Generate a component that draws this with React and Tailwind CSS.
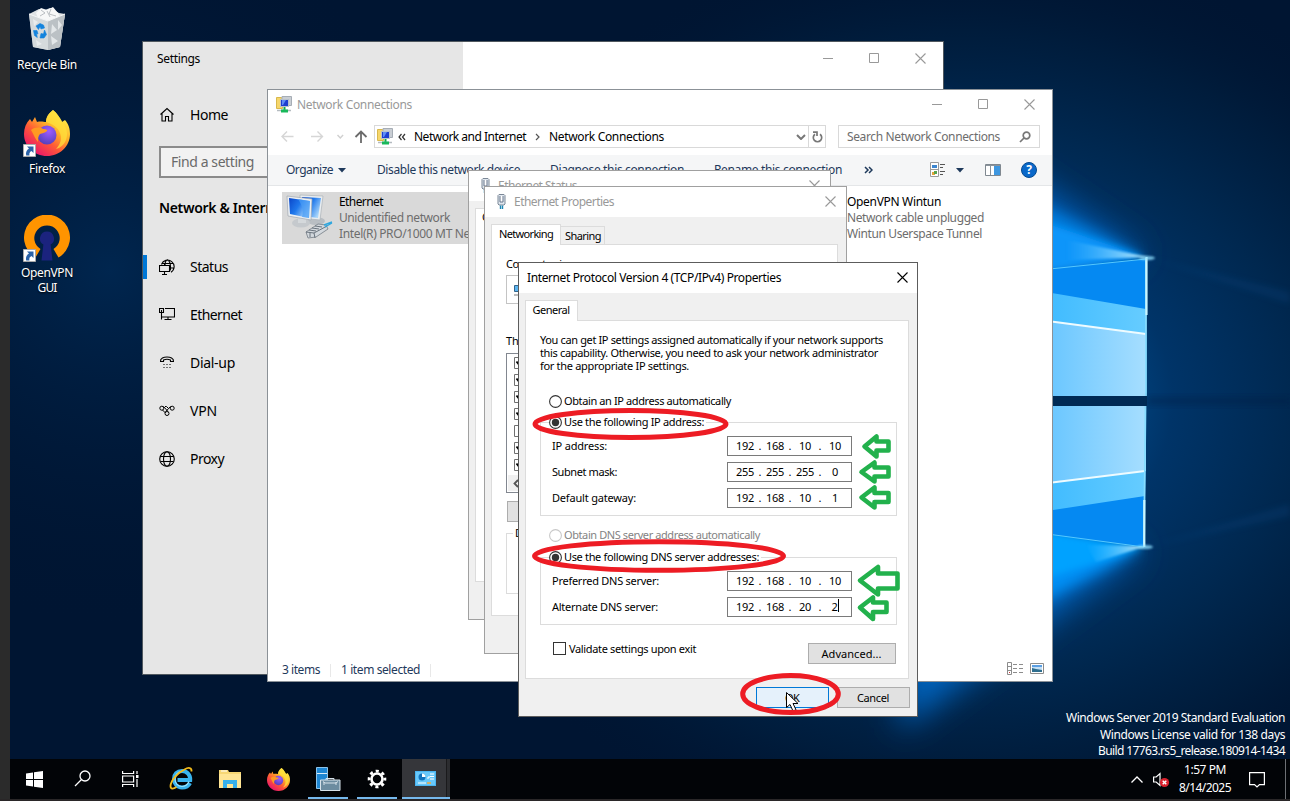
import React, { useLayoutEffect, useRef, useState } from "react";

/* Single line of text whose tracking is adjusted so that it fills `w` pixels. */
function T({ w, className = "", children }) {
  const ref = useRef(null);
  const [ls, setLs] = useState(0);
  useLayoutEffect(() => {
    const n = String(children).length;
    if (w && ref.current) setLs((w - ref.current.getBoundingClientRect().width) / n);
  }, []);
  return (
    <span
      ref={ref}
      className={"inline-block shrink-0 whitespace-pre " + className}
      style={{ letterSpacing: ls + "px" }}
    >
      {children}
    </span>
  );
}

function Close({ className = "text-[#999]" }) {
  return (
    <svg className={"h-[11px] w-[11px] shrink-0 " + className} viewBox="0 0 11 11" fill="none" stroke="currentColor" strokeWidth="1.1">
      <path d="M.5.5l10 10M10.5.5l-10 10" />
    </svg>
  );
}
function Minimise() {
  return (
    <svg className="h-[11px] w-[11px] shrink-0" viewBox="0 0 11 11" fill="none" stroke="#999">
      <path d="M0 5.5h10" />
    </svg>
  );
}
function Maximise() {
  return (
    <svg className="h-[11px] w-[11px] shrink-0" viewBox="0 0 11 11" fill="none" stroke="#999">
      <path d="M.5.5h9v9h-9z" />
    </svg>
  );
}

function Wallpaper() {
  return (
    <svg className="absolute inset-0 h-[801px] w-[1290px]" viewBox="0 0 1290 801">
      <defs>
        <radialGradient id="glow" gradientUnits="userSpaceOnUse" cx="960" cy="400" r="400" gradientTransform="translate(960 400) scale(1.4 1.15) translate(-960 -400)">
          <stop offset="0" stopColor="#0068c0" />
          <stop offset=".2" stopColor="#005093" />
          <stop offset=".38" stopColor="#003468" />
          <stop offset=".6" stopColor="#002850" />
          <stop offset=".8" stopColor="#001d3d" stopOpacity=".9" />
          <stop offset="1" stopColor="#001532" stopOpacity="0" />
        </radialGradient>
        <radialGradient id="leftGlow" gradientUnits="userSpaceOnUse" cx="110" cy="270" r="360">
          <stop offset="0" stopColor="#00264f" />
          <stop offset="1" stopColor="#001532" stopOpacity="0" />
        </radialGradient>
        <linearGradient id="pane" x1="0" x2="1">
          <stop offset="0" stopColor="#64c4ff" />
          <stop offset="1" stopColor="#a6deff" />
        </linearGradient>
        <linearGradient id="band" x1="0" x2="1">
          <stop offset="0" stopColor="#3dbaff" />
          <stop offset="1" stopColor="#66ccff" />
        </linearGradient>
        <linearGradient id="flare" x1="0" x2="1">
          <stop offset="0" stopColor="#5cc6ff" stopOpacity="0" />
          <stop offset="1" stopColor="#c4f0ff" />
        </linearGradient>
        <filter id="b12" x="-50%" y="-50%" width="200%" height="200%"><feGaussianBlur stdDeviation="16" /></filter>
        <filter id="b5" x="-50%" y="-50%" width="200%" height="200%"><feGaussianBlur stdDeviation="7" /></filter>
        <filter id="b3" x="-50%" y="-50%" width="200%" height="200%"><feGaussianBlur stdDeviation="3" /></filter>
        <filter id="b2" x="-50%" y="-50%" width="200%" height="200%"><feGaussianBlur stdDeviation="1.3" /></filter>
      </defs>
      <rect width="1290" height="801" fill="#001532" />
      <rect width="1290" height="801" fill="url(#leftGlow)" />
      <rect width="1290" height="801" fill="url(#glow)" />
      <path d="M900 90L1145 256 900 300z" fill="#005cb2" filter="url(#b12)" />
      <path d="M900 730L1142 550 900 500z" fill="#0064be" filter="url(#b12)" />
      <path d="M960 165L1144 257 960 290z" fill="#007fe0" filter="url(#b5)" />
      <path d="M960 645L1142 549 960 520z" fill="#0090f5" filter="url(#b5)" />
      <path d="M980 200L1146 257 980 280z" fill="#0795fa" filter="url(#b3)" />
      <path d="M980 598L1144 548 980 520z" fill="#00a2ff" filter="url(#b3)" />
      <path d="M1066 240L1148 257 1066 260z" fill="url(#flare)" filter="url(#b2)" />
      <path d="M1096 562L1146 546 1086 545z" fill="url(#flare)" filter="url(#b2)" />
      <path d="M1040 270L1146 259V396H1040z" fill="#0589f2" />
      <path d="M1040 291L1146 309V396H1040z" fill="url(#band)" />
      <path d="M1040 320L1146 334V396H1040z" fill="url(#pane)" />
      <path d="M1040 320L1146 334" stroke="#eefbff" strokeWidth="2.2" />
      <path d="M1040 270L1146 259" stroke="#55c8ff" />
      <path d="M1040 406H1146L1144.500 547L1040 533z" fill="#0589f2" />
      <path d="M1040 406H1146L1145 496L1040 512z" fill="url(#band)" />
      <path d="M1040 406H1146V471L1040 484z" fill="url(#pane)" />
      <path d="M1040 484L1145 471" stroke="#eefbff" strokeWidth="2.2" />
      <path d="M1040 533L1144 547" stroke="#55c8ff" />
      <path d="M1146 258V396M1145.500 406L1144 547" stroke="#86dcff" strokeWidth="1.800" />
      <path d="M1146.500 257V315M1144.300 500V547" stroke="#c9f6ff" strokeWidth="2.200" />
      <path d="M1040 396H1147V406H1040z" fill="#002a55" />
      <path d="M1147 397H1290V405H1147z" fill="#001f42" opacity=".35" filter="url(#b3)" />
      <path d="M1148 258L1290 292V304z M1146 547L1290 504V516z" fill="#0a4a86" opacity=".25" filter="url(#b3)" />
      <ellipse cx="1147" cy="258" rx="8" ry="2" fill="#8fe0ff" opacity=".8" filter="url(#b2)" />
      <ellipse cx="1145" cy="547" rx="8" ry="2" fill="#8fe0ff" opacity=".8" filter="url(#b2)" />
    </svg>
  );
}

function FirefoxLogo({ className }) {
  return (
    <svg className={className} viewBox="0 0 46 46">
      <defs>
        <linearGradient id="fxBody" x1=".85" y1=".1" x2=".2" y2=".95">
          <stop offset="0" stopColor="#fff24a" />
          <stop offset=".35" stopColor="#ffb028" />
          <stop offset=".62" stopColor="#ff5a36" />
          <stop offset="1" stopColor="#e8116e" />
        </linearGradient>
        <radialGradient id="fxGlobe" cx=".6" cy=".3" r=".8">
          <stop offset="0" stopColor="#a05bff" />
          <stop offset="1" stopColor="#4a3db5" />
        </radialGradient>
      </defs>
      <path d="M29 0C33 3 36 8 38 12l3-2c4 5 5 9 5 14 0 12-10 22-23 22S0 36 0 24c0-6 2-11 6-15l2 3 3-5 2 5c4-1 7 0 9 0 0-5 3-9 7-12z" fill="url(#fxBody)" />
      <path d="M29 0C33 3 36 8 39 13c4 5 5 11 3 17-2 5-6 8-10 9 5-5 6-11 4-16-2-6-8-9-14-11 0-5 3-9 7-12z" fill="#ffe03c" opacity=".75" />
      <circle cx="23" cy="25" r="9.500" fill="url(#fxGlobe)" />
      <path d="M7 20c4-3 9-3 12-1 3 0 5 1 4 2-2 2-5 2-7 3-2 2-2 5-2 8-3-3-4-7-7-12z" fill="#ff9a22" />
    </svg>
  );
}

function Shortcut() {
  return (
    <svg className="absolute bottom-[-1px] left-[-1px] h-[13px] w-[13px]" viewBox="0 0 13 13">
      <path d="M.5.5h12v12H.5z" fill="#fff" stroke="#aaa" />
      <path d="M4 2.500h6.500V9L8.500 7C6.500 8 6 9.500 6.500 11.500H3.200C2.500 8.500 3.500 6 6 4.500z" fill="#2a62a8" />
    </svg>
  );
}

function RecycleIcon() {
  return (
    <svg className="h-[44px] w-[40px]" viewBox="0 0 40 44">
      <path d="M2 7L12 2l6 1 5-2 9 5 6 1-5 33-12 3-15-3z" fill="#dfe3e5" />
      <path d="M9 6l5-5 6 2 6-3 5 6 2 4-10 4-12-3z" fill="#f7f8f8" />
      <path d="M14 3l4 3-5 3M24 2l-2 5 7 2M20 4l3 6" stroke="#a9afb4" fill="none" strokeWidth=".8" />
      <path d="M2 7l19 7 17-7-5 33-12 3-15-3z" fill="#d3d8db" opacity=".85" />
      <path d="M21 14l17-7-5 33-12 3z" fill="#bbc1c5" />
      <path d="M25 17l5 6-6 4zM31 13l4 5-4 5zM24 29l7 5-6 4zM6 12l5 3-4 4zM9 33l6 4-5 2z" fill="#edf0f1" opacity=".8" />
      <path d="M2 7l19 7 17-7" stroke="#f4f6f7" fill="none" />
      <path d="M9 19l4-2.500 3.500 1.500 1 3-3.500 1-1-2.500-1.500 3zM6.500 23.500l3.500 0 1 3.500-1.500-.5.800 4-2.800-2zM17.500 23l2 4.500-2.500 3.500h-4l1-4.500 2.500.500z" fill="#1383dd" stroke="#1383dd" strokeWidth=".6" />
    </svg>
  );
}

function OpenVpnIcon() {
  return (
    <svg className="h-[46px] w-[46px]" viewBox="0 0 46 46">
      <path d="M11.500 42.500A23 23 0 1 1 34.500 42.500L29.500 34A12.700 12.700 0 1 0 16.500 34z" fill="#ff9400" />
      <path d="M23 16.500a7 7 0 0 1 3.600 13L28.500 45.500h-11l1.900-16A7 7 0 0 1 23 16.500z" fill="#1b237e" />
    </svg>
  );
}

function DesktopIcons() {
  return (
    <div className="absolute left-[10px] top-[7px] flex w-[74px] flex-col items-center text-[12px] leading-[15px] text-white [text-shadow:0_1px_2px_#000]">
      <RecycleIcon />
      <T w={60} className="mt-[6px]">Recycle Bin</T>
      <div className="relative mt-[38px] h-[46px] w-[46px]">
        <FirefoxLogo className="h-[46px] w-[46px]" />
        <Shortcut />
      </div>
      <T w={36} className="mt-[5px]">Firefox</T>
      <div className="relative mt-[39px] h-[46px] w-[46px]">
        <OpenVpnIcon />
        <Shortcut />
      </div>
      <T w={52} className="mt-[4px]">OpenVPN</T>
      <T w={19}>GUI</T>
    </div>
  );
}

const navIcons = {
  Home: <path d="M1.500 7.500L8 1.500l6.500 6M3 6.500V14h3.500V9.500h3V14H13V6.500" />,
  Status: (
    <g>
      <path d="M2.500 5.500A6.500 6.500 0 1 1 12 13.200M2.500 4.500h12M6 6C6.200 3 7.500 1 8.500.8 10.500 2 12 6 11.300 11.500M11 9h4" />
      <path d="M.5 6.500h10v6H.5zM5.500 12.500v3M3 15.500h5M5.500 4.500v2" />
    </g>
  ),
  Ethernet: <path d="M.5 1.500h4v4h-4zM2.500 3v4.500M2.500 5.500v7M6 1.500h9.500v8.500H3M9 10v2.500M5.500 12.500h7" />,
  "Dial-up": (
    <g>
      <path d="M1.500 6.500C1 3 5 2 8 2s7 1 6.500 4.500h-3V5C9.500 4.200 6.500 4.200 4.500 5v1.500z" />
      <path d="M4.500 9.500h1M7.500 9.500h1M10.500 9.500h1M4.500 12.500h1M7.500 12.500h1M10.500 12.500h1" />
    </g>
  ),
  VPN: (
    <g strokeWidth="1">
      <circle cx="2.800" cy="5.200" r="2" />
      <circle cx="13.200" cy="5.200" r="2" />
      <circle cx="8" cy="10.500" r="2" />
      <path d="M4.500 3.500L9 8.500M6.500 8.800L11.500 3.500M6 3.500h1.500L9 5M3.500 7l3 3" />
    </g>
  ),
  Proxy: (
    <g>
      <circle cx="8" cy="8" r="7.300" />
      <ellipse cx="8" cy="8" rx="3.500" ry="7.300" />
      <path d="M1.500 5.500h13M1.500 10.500h13" />
    </g>
  ),
};

function NavRow({ name, w, active }) {
  return (
    <div className="flex h-[48px] items-center text-[14px]">
      <div className={"h-[24px] w-[4px] " + (active ? "bg-[#0078d7]" : "")} />
      <svg className="mb-px ml-[12px] h-[16px] w-[16px]" viewBox="0 0 16 16" fill="none" stroke="#000" strokeWidth="1.100">
        {navIcons[name]}
      </svg>
      <T w={w} className="mb-px ml-[15px]">{name}</T>
    </div>
  );
}

function SettingsWindow() {
  return (
    <div className="absolute left-[142px] top-[41px] flex h-[634px] w-[802px] border border-[#50585f] bg-white text-black">
      <div className="flex w-[320px] flex-col bg-[#e6e6e6]">
        <T w={43} className="ml-[14px] mt-[8px] self-start text-[12px] leading-[18px]">Settings</T>
        <div className="mt-[23px]"><NavRow name="Home" w={38} /></div>
        <div className="ml-[16px] mt-[7px] flex h-[32px] items-center border-2 border-[#8b8b8b] bg-[#f2f2f2] pb-[2px] pl-[10px] text-[14px] text-[#6a6a6a]">
          <T w={83}>Find a setting</T>
        </div>
        <T w={128} className="ml-[16px] mt-[20px] self-start text-[14px] font-semibold leading-[20px]">Network &amp; Internet</T>
        <div className="mt-[25px] flex flex-col">
          <NavRow name="Status" w={38} active />
          <NavRow name="Ethernet" w={52} />
          <NavRow name="Dial-up" w={45} />
          <NavRow name="VPN" w={27} />
          <NavRow name="Proxy" w={34} />
        </div>
      </div>
      <div className="flex h-[33px] flex-1 items-center justify-end gap-[35px] pr-[17px]">
        <Minimise />
        <Maximise />
        <Close />
      </div>
    </div>
  );
}

function NetIcon() {
  return (
    <svg className="h-[17px] w-[17px] shrink-0" viewBox="0 0 17 17">
      <path d="M.5 1.500h5l1 1v10h-6z" fill="#f6d66b" stroke="#d8b84c" />
      <path d="M6 .5h9.500v9H6z" fill="#c9ced4" stroke="#a6adb5" />
      <path d="M4.500 3.500h8v7h-8z" fill="#1d3fd0" stroke="#b8c2cc" />
      <path d="M6 4h4l-3 5H6z" fill="#5d8cf5" />
      <path d="M8.500 11v3" stroke="#0faa4c" strokeWidth="2" />
      <path d="M1 14.500h14" stroke="#b4bbc0" strokeWidth="1.500" />
      <path d="M5 13.500h7v3H5z" fill="#19b85a" />
    </svg>
  );
}

function Caret() {
  return (
    <svg className="h-[5px] w-[8px] shrink-0" viewBox="0 0 8 5"><path d="M0 0h8L4 4.500z" fill="#1e395b" /></svg>
  );
}

function AdapterIcon() {
  return (
    <svg className="h-[46px] w-[47px] shrink-0" viewBox="0 0 47 46">
      <defs>
        <linearGradient id="scr" x1="0" x2="1" y2=".6">
          <stop offset="0" stopColor="#0a45c8" />
          <stop offset=".5" stopColor="#1f78ec" />
          <stop offset="1" stopColor="#a9d6fb" />
        </linearGradient>
      </defs>
      <ellipse cx="30" cy="27" rx="9" ry="4" fill="#b9bec3" />
      <path d="M14 1l23 1-3 24-20-2z" fill="#e9edf0" stroke="#aab1b7" strokeWidth=".7" />
      <path d="M16 3l19 1-3 20-16-2z" fill="url(#scr)" />
      <ellipse cx="15" cy="29" rx="9" ry="4.500" fill="#c5c9cd" />
      <path d="M12 24h8v5h-8z" fill="#d5d9dc" />
      <path d="M1 2l25 3-1 21L2 22z" fill="#eceff2" stroke="#a0a8b0" strokeWidth=".7" />
      <path d="M3 4l21 3-1 17L4 20z" fill="url(#scr)" />
      <path d="M12 5l12 2-1 17-7-1c2-6 0-12-4-18z" fill="#4a9df5" opacity=".7" />
      <path d="M20 38l12-8 8 1 2 4-12 8-8 1z" fill="#d3d8dd" stroke="#737c85" strokeWidth=".8" />
      <path d="M20 38l8 1 13-7M28 39l1 5M23 36l7 1M26 34l7 1M29 32l7 1M24 39v4" stroke="#5f6973" fill="none" strokeWidth=".9" />
      <path d="M38 31l8-3M39 33l7-4" stroke="#2fa7df" strokeWidth="1.400" />
    </svg>
  );
}

function NetworkWindow() {
  return (
    <div className="absolute left-[267px] top-[89px] flex h-[593px] w-[786px] flex-col border border-[#8b9197] bg-white text-[12px] text-black">
      <div className="flex h-[28px] items-center pl-[8px] pr-[17px] text-[#999]">
        <NetIcon />
        <T w={115} className="ml-[4px] mt-[1px]">Network Connections</T>
        <div className="ml-auto flex gap-[35px]">
          <Minimise />
          <Maximise />
          <Close />
        </div>
      </div>
      <div className="mt-[7px] flex h-[23px] items-center pl-[13px]">
        <svg className="h-[13px] w-[92px] shrink-0" viewBox="0 0 92 13" fill="none">
          <path d="M12.500 6.500H1M6 1.500l-5 5 5 5M30 6.500h11.500M36.500 1.500l5 5-5 5" stroke="#d6d6d6" strokeWidth="1.400" />
          <path d="M56.500 5l2.800 3 2.800-3" stroke="#d0d0d0" strokeWidth="1.400" />
          <path d="M80 13V1.500M74.500 7L80 1.500 85.500 7" stroke="#6b6b6b" strokeWidth="1.800" />
        </svg>
        <div className="ml-[1px] flex h-[23px] w-[452px] shrink-0 items-center border border-[#d9d9d9] pl-[2px]">
          <NetIcon />
          <svg className="ml-[4px] h-[8px] w-[8px] shrink-0" viewBox="0 0 8 8" fill="none" stroke="#333" strokeWidth="1.200">
            <path d="M3.500 1L1 4l2.500 3M7 1L4.500 4 7 7" />
          </svg>
          <T w={112} className="ml-[8px]">Network and Internet</T>
          <svg className="ml-[9px] h-[8px] w-[5px] shrink-0" viewBox="0 0 5 8" fill="none" stroke="#555" strokeWidth="1.200">
            <path d="M1 1l3 3-3 3" />
          </svg>
          <T w={115} className="ml-[9px]">Network Connections</T>
          <svg className="ml-auto h-[6px] w-[10px] shrink-0" viewBox="0 0 10 6" fill="none" stroke="#777" strokeWidth="2">
            <path d="M1 1l4 4 4-4" />
          </svg>
          <div className="ml-[2px] flex h-[21px] w-[17px] items-center justify-center border-l border-[#d9d9d9]">
            <svg className="h-[12px] w-[11px]" viewBox="0 0 11 12" fill="none" stroke="#777" strokeWidth="1.700">
              <path d="M8 3.200A4.200 4.200 0 1 1 3 3.200M1 1.200h4V5" />
            </svg>
          </div>
        </div>
        <div className="ml-[12px] flex h-[23px] w-[202px] items-center border border-[#d9d9d9] pl-[8px] pr-[8px] text-[#6d6d6d]">
          <T w={153}>Search Network Connections</T>
          <svg className="ml-auto h-[12px] w-[12px]" viewBox="0 0 12 12" fill="none" stroke="#777" strokeWidth="1.700">
            <circle cx="7.500" cy="4.500" r="3.300" />
            <path d="M5 7L1 11" />
          </svg>
        </div>
      </div>
      <div className="mt-[7px] flex h-[31px] items-center border-b border-[#e4e6e8] bg-[#f5f6f7] pl-[18px] text-[#1e395b]">
        <T w={47}>Organize</T>
        <span className="ml-[5px] flex"><Caret /></span>
        <T w={143} className="ml-[31px]">Disable this network device</T>
        <T w={134} className="ml-[30px]">Diagnose this connection</T>
        <T w={128} className="ml-[30px]">Rename this connection</T>
        <svg className="ml-[22px] h-[8px] w-[9px]" viewBox="0 0 9 8" fill="none" stroke="#1e395b" strokeWidth="1.500">
          <path d="M1 1l3 3-3 3M5 1l3 3-3 3" />
        </svg>
        <svg className="ml-[57px] h-[16px] w-[16px]" viewBox="0 0 16 16">
          <path d="M.5.5h8v14h-8zM.5 7.500h8" fill="#fff" stroke="#9a9a9a" />
          <path d="M2 3h5v3H2z" fill="#3d86cf" />
          <path d="M2 10h3v3H2z" fill="#e3a33a" />
          <path d="M4 9h3v3H4z" fill="#55a34e" />
          <path d="M10 2.500h5M10 5.500h3M10 9.500h5M10 12.500h3" stroke="#555" />
        </svg>
        <span className="ml-[10px] flex"><Caret /></span>
        <svg className="ml-[21px] h-[12px] w-[16px]" viewBox="0 0 16 12">
          <path d="M.5.5h15v11H.5z" fill="#fff" stroke="#7f8890" />
          <path d="M9 1h6v10H9z" fill="#3e97e0" />
          <path d="M5.500 1v10M1 1.500h14" stroke="#8a939b" />
        </svg>
        <div className="ml-[20px] flex h-[16px] w-[16px] items-center justify-center rounded-full border border-[#054a91] bg-[#0a68c9] text-[12px] font-bold leading-[14px] text-white">?</div>
      </div>
      <div className="mt-[6px] flex pl-[14px]">
        <div className="flex h-[52px] w-[240px] shrink-0 gap-[6px] bg-[#d9d9d9] pl-[4px] pt-[2px]">
          <AdapterIcon />
          <div className="flex flex-col items-start leading-[16px] text-[#6d6d6d]">
            <T w={44} className="text-black">Ethernet</T>
            <T w={111}>Unidentified network</T>
            <T w={180}>Intel(R) PRO/1000 MT Network C...</T>
          </div>
        </div>
        <div className="ml-[325px] flex flex-col items-start pt-[2px] leading-[16px] text-[#6d6d6d]">
          <T w={94} className="text-black">OpenVPN Wintun</T>
          <T w={137}>Network cable unplugged</T>
          <T w={135}>Wintun Userspace Tunnel</T>
        </div>
      </div>
      <div className="mt-auto flex h-[22px] items-center pl-[14px] pr-[8px] text-[#1e395b]">
        <T w={38}>3 items</T>
        <div className="ml-[10px] h-[13px] w-px bg-[#e8e8e8]" />
        <T w={79} className="ml-[10px]">1 item selected</T>
        <div className="ml-[10px] h-[13px] w-px bg-[#e8e8e8]" />
        <svg className="mb-[3px] ml-auto h-[13px] w-[16px]" viewBox="0 0 16 13" fill="none">
          <path d="M.5.5h4v12h-4zM.5 4.500h4M.5 8.500h4M6 2.500h4M12 2.500h4M6 6.500h4M12 6.500h4M6 10.500h4M12 10.500h4" stroke="#8c8c8c" />
          <path d="M2 10.500h1" stroke="#c33" />
        </svg>
        <svg className="mb-[3px] ml-[7px] h-[11px] w-[14px]" viewBox="0 0 14 11">
          <path d="M.5.500h13v10H.5z" fill="#fff" stroke="#8c8c8c" />
          <path d="M2 2h10v7H2z" fill="#c6e0f5" />
          <path d="M2 5l4 1 6 1v2H2z" fill="#2f6f8f" />
          <path d="M2 2h10v2L2 4z" fill="#5b9fe3" />
        </svg>
      </div>
    </div>
  );
}

function PlugIcon() {
  return (
    <svg className="h-[16px] w-[9px] shrink-0" viewBox="0 0 9 16">
      <path d="M1 1.500L2 .5h5l1 1V10L7 11H2l-1-1z" fill="#dfe7ef" stroke="#7b8796" />
      <path d="M3 2v6h3V2" fill="#fff" stroke="#66758a" />
      <path d="M3.500 11.500V15M5.500 11.500V15" stroke="#1c86b4" strokeWidth="1.400" />
    </svg>
  );
}

function DialogTitle({ text, w }) {
  return (
    <div className="flex h-[30px] shrink-0 items-center bg-white pl-[12px] pr-[10px] text-[12px] text-[#999]">
      <PlugIcon />
      <T w={w} className="ml-[8px]">{text}</T>
      <div className="ml-auto mt-[-2px]"><Close /></div>
    </div>
  );
}

function StatusDialog() {
  return (
    <div className="absolute left-[468px] top-[170px] flex h-[450px] w-[363px] flex-col border border-[#a0a0a0] bg-[#f0f0f0] text-[11px] text-black">
      <DialogTitle text="Ethernet Status" w={79} />
      <div className="mx-[6px] mt-[7px] h-[374px] border border-[#dcdcdc] bg-white pl-[6px]">
        <T w={54} className="leading-[16px]">Connection</T>
      </div>
    </div>
  );
}

function ListCheck({ checked }) {
  return (
    <div className="flex h-[17px] pl-[7px]">
      <svg className="h-[12px] w-[12px]" viewBox="0 0 12 12" fill="none">
        <path d="M.5.5h11v11H.5z" fill="#fff" stroke="#707070" />
        {checked && <path d="M2.500 4.500l3 4 4-6" stroke="#000" strokeWidth="1.800" />}
      </svg>
    </div>
  );
}

function PropertiesDialog() {
  return (
    <div className="absolute left-[484px] top-[186px] flex h-[468px] w-[363px] flex-col border border-[#a0a0a0] bg-[#f0f0f0] text-[11px] text-black">
      <DialogTitle text="Ethernet Properties" w={100} />
      <div className="mt-[7px] flex h-[21px] items-end pl-[6px]">
        <div className="relative z-10 flex h-[21px] w-[70px] justify-center border border-b-0 border-[#dcdcdc] bg-white leading-[18px]">
          <T w={54}>Networking</T>
        </div>
        <div className="mb-px flex h-[18px] w-[44px] border border-b-0 border-l-0 border-[#dcdcdc] pl-[4px] leading-[18px]">
          <T w={36}>Sharing</T>
        </div>
      </div>
      <div className="ml-[6px] mt-[-1px] flex h-[372px] w-[347px] flex-col border border-[#dcdcdc] bg-white pl-[14px] pr-[14px] pt-[12px]">
        <T w={71} className="self-start leading-[14px]">Connect using:</T>
        <div className="mt-[4px] flex h-[29px] items-center border border-[#c4c4c4] pl-[7px]">
          <svg className="h-[15px] w-[16px]" viewBox="0 0 16 15">
            <path d="M.5 3.500h4l1-2h8v8H.5z" fill="#5bb4f0" stroke="#33658c" />
            <path d="M0 13h4" stroke="#bbb" strokeWidth="2" />
            <path d="M4 13h8" stroke="#3ba04a" strokeWidth="2.500" />
          </svg>
        </div>
        <T w={205} className="mt-[30px] self-start leading-[14px]">This connection uses the following items:</T>
        <div className="mt-[5px] flex h-[140px] flex-col border border-[#828790] pt-[3px]">
          {[1, 1, 1, 1, 0, 1, 1].map((c, i) => <ListCheck key={i} checked={!!c} />)}
          <div className="ml-[1px] mt-[-1px] flex h-[16px] items-center bg-[#f0f0f0] pl-[5px]">
            <svg className="h-[9px] w-[6px]" viewBox="0 0 6 9" fill="none" stroke="#555" strokeWidth="1.800"><path d="M5 1L1.500 4.500 5 8" /></svg>
          </div>
        </div>
        <div className="ml-[1px] mt-[8px] h-[21px] w-[90px] border border-[#adadad] bg-[#e1e1e1]" />
        <div className="mt-[11px] h-[61px] border border-[#dcdcdc] pl-[6px]">
          <div className="mt-[-8px] w-fit bg-white px-[2px] leading-[14px]"><T w={56}>Description</T></div>
        </div>
      </div>
    </div>
  );
}

function Radio({ checked, disabled }) {
  return (
    <svg className="h-[13px] w-[13px] shrink-0" viewBox="0 0 13 13">
      <circle cx="6.500" cy="6.500" r="5.900" fill="#fff" stroke={disabled ? "#c8c8c8" : "#333"} strokeWidth="1.100" />
      {checked && <circle cx="6.500" cy="6.500" r="3.700" fill="#333" />}
    </svg>
  );
}

function IpRow({ label, w, ip, caret }) {
  return (
    <div className="flex h-[20px] items-center pl-[11px] pr-[44px]">
      <T w={w}>{label}</T>
      <div className="ml-auto flex h-[20px] w-[125px] items-center border border-[#7a7a7a] bg-white pl-[4px]">
        {ip.map((n, i) => (
          <React.Fragment key={i}>
            <span className="flex w-[26px] justify-center">
              <T w={n.length * 6}>{n}</T>
              {caret && i === 3 && <span className="h-[13px] w-px bg-black" />}
            </span>
            {i < 3 && <span className="w-[4px] text-center">.</span>}
          </React.Fragment>
        ))}
      </div>
    </div>
  );
}

function Button({ text, w, className }) {
  return (
    <div className={"flex h-[21px] items-center justify-center border pr-px pt-px " + className}>
      <T w={w}>{text}</T>
    </div>
  );
}

function Ipv4Dialog() {
  return (
    <div className="absolute left-[518px] top-[262px] flex h-[455px] w-[400px] flex-col border border-[#5c5c5c] bg-[#f0f0f0] text-[11px] text-black">
      <div className="flex h-[30px] shrink-0 items-center bg-white pl-[8px] pr-[9px] text-[12px]">
        <T w={254}>Internet Protocol Version 4 (TCP/IPv4) Properties</T>
        <div className="ml-auto mt-[-1px]"><Close className="text-black" /></div>
      </div>
      <div className="relative z-10 ml-[6px] mt-[7px] flex h-[21px] w-[53px] shrink-0 justify-center border border-b-0 border-[#dcdcdc] bg-white pr-px leading-[18px]">
        <T w={37}>General</T>
      </div>
      <div className="ml-[6px] mt-[-1px] flex h-[359px] w-[384px] shrink-0 flex-col border border-[#dcdcdc] bg-white pt-[12px]">
        <div className="flex flex-col items-start pl-[14px] leading-[13px]">
          <T w={343}>You can get IP settings assigned automatically if your network supports</T>
          <T w={338}>this capability. Otherwise, you need to ask your network administrator</T>
          <T w={149}>for the appropriate IP settings.</T>
        </div>
        <div className="mt-[22px] flex h-[14px] items-center gap-[2px] pl-[23px]">
          <Radio />
          <T w={167}>Obtain an IP address automatically</T>
        </div>
        <div className="ml-[14px] mt-[14px] h-[94px] w-[357px] border border-[#dcdcdc]">
          <div className="ml-[8px] mt-[-8px] flex h-[14px] w-fit items-center gap-[2px] bg-white pr-[2px]">
            <Radio checked />
            <T w={140}>Use the following IP address:</T>
          </div>
          <div className="mt-[7px] flex flex-col gap-[6px]">
            <IpRow label="IP address:" w={55} ip={["192", "168", "10", "10"]} />
            <IpRow label="Subnet mask:" w={65} ip={["255", "255", "255", "0"]} />
            <IpRow label="Default gateway:" w={84} ip={["192", "168", "10", "1"]} />
          </div>
        </div>
        <div className="mt-[12px] flex h-[14px] items-center gap-[2px] pl-[23px] text-[#838383]">
          <Radio disabled />
          <T w={196}>Obtain DNS server address automatically</T>
        </div>
        <div className="ml-[14px] mt-[15px] h-[68px] w-[357px] border border-[#dcdcdc]">
          <div className="ml-[8px] mt-[-8px] flex h-[14px] w-fit items-center gap-[2px] bg-white pr-[2px]">
            <Radio checked />
            <T w={195}>Use the following DNS server addresses:</T>
          </div>
          <div className="mt-[7px] flex flex-col gap-[6px]">
            <IpRow label="Preferred DNS server:" w={107} ip={["192", "168", "10", "10"]} />
            <IpRow label="Alternate DNS server:" w={106} ip={["192", "168", "20", "2"]} caret />
          </div>
        </div>
        <div className="mt-[17px] flex items-start pl-[27px] pr-[12px]">
          <div className="h-[13px] w-[13px] border border-[#333]" />
          <T w={127} className="ml-[3px] leading-[14px]">Validate settings upon exit</T>
          <div className="ml-auto mt-[1px]">
            <Button text="Advanced..." w={60} className="w-[88px] border-[#adadad] bg-[#e1e1e1]" />
          </div>
        </div>
      </div>
      <div className="mt-[8px] flex justify-end gap-[8px] pr-[7px]">
        <Button text="OK" w={14} className="w-[73px] border-[#0078d7] bg-[#e5f1fb]" />
        <Button text="Cancel" w={32} className="w-[73px] border-[#adadad] bg-[#e1e1e1]" />
      </div>
    </div>
  );
}

/* Hand-drawn marks over the dialog, and the mouse pointer. */
function Annotations() {
  return (
    <svg className="absolute inset-0 h-[801px] w-[1290px]" viewBox="0 0 1290 801" fill="none">
      <path d="M786.500 692.500v15l3.500-3 3 6.500 3-1.200-3-6.300h5z" fill="#fff" stroke="#000" strokeWidth="1" />
      <g stroke="#ed1c24" strokeWidth="5">
        <ellipse cx="630.500" cy="424" rx="95.500" ry="13.500" />
        <ellipse cx="659" cy="556" rx="124.500" ry="14.300" />
        <ellipse cx="790.500" cy="694" rx="47.800" ry="18.500" />
      </g>
      <g stroke="#22b14c" strokeWidth="4.600" fill="#fff" strokeLinejoin="round">
        <path d="M864.500 446.500L876.500 436.500v5h12v9H876.500v6z" />
        <path d="M861.500 472L874.500 462.500v5h14v9H874.500v5z" />
        <path d="M861.500 497.500L874.500 487.500v5.500h14v9H874.500v5.500z" />
        <path d="M860 580.500L878 567v6.500h19.500v15H878v6z" />
        <path d="M860 607.500L873 597.500v5h13.500v9.500H873v7z" />
      </g>
    </svg>
  );
}

function Taskbar() {
  const slot = "relative flex h-[40px] w-[49px] shrink-0 items-center justify-center";
  return (
    <div className="absolute left-[10px] top-[759px] flex h-[40px] w-[1280px] bg-[#020407] text-[12px] text-white">
      <div className="flex h-[40px] w-[48px] shrink-0 items-center justify-center">
        <svg className="h-[17px] w-[17px]" viewBox="0 0 17 17" fill="#fff">
          <path d="M0 2.500l7-1V8H0zM8 1.300L17 0v8H8zM0 9h7v6.500l-7-1zM8 9h9v8l-9-1.300z" />
        </svg>
      </div>
      <div className={slot}>
        <svg className="mb-px h-[17px] w-[17px]" viewBox="0 0 17 17" fill="none" stroke="#fff" strokeWidth="1.300">
          <circle cx="11" cy="6" r="5" />
          <path d="M7.500 9.500L1 16" />
        </svg>
      </div>
      <div className={slot}>
        <svg className="mb-px mr-[3px] h-[16px] w-[17px]" viewBox="0 0 17 16" fill="none" stroke="#fff" strokeWidth="1.200">
          <path d="M.6 0v2.500h11V0M.6 16v-2.500h11V16M.6 5h11v6H.6zM15 0v3M15 8v8" />
          <path d="M14 4h2.500v3H14z" fill="#fff" stroke="none" />
        </svg>
      </div>
      <div className={slot}>
        <svg className="mb-[2px] h-[24px] w-[24px]" viewBox="0 0 24 24" fill="none">
          <path d="M21 17C19.500 20 16.500 21.500 13 21.500c-5 0-8-3.800-8-8.500S8 5 13 5s8.500 4 8.200 9H8.500" stroke="#39b4ee" strokeWidth="4" />
          <path d="M20 15.500C18.500 19 16 20.500 13 20.500c-4 0-7-3-7-7.500s3-7.500 7-7.500" stroke="#9be4fb" strokeWidth="1.200" />
          <path d="M22.500 5.500c.5-4-3-4.500-7-2C9 6.500 2 14 1.500 20c0 3.500 3 3 6 1" stroke="#f2bb1c" strokeWidth="1.800" />
        </svg>
      </div>
      <div className={slot}>
        <svg className="h-[18px] w-[22px]" viewBox="0 0 22 18">
          <path d="M0 0h9l1 2h12v16H0z" fill="#f7d774" />
          <path d="M0 4h22v14H0z" fill="#ffe594" />
          <path d="M4 18v-8h14v8h-4v-4H8v4z" fill="#37b0ea" />
          <path d="M2 1h6" stroke="#fff" />
        </svg>
      </div>
      <div className={slot}><FirefoxLogo className="h-[23px] w-[23px]" /></div>
      <div className={slot}>
        <svg className="ml-[2px] h-[24px] w-[25px]" viewBox="0 0 25 24">
          <path d="M.5.5h11v21H.5z" fill="#1d86d3" stroke="#8cc4ea" />
          <path d="M1 6.500h10" stroke="#d9ecf8" />
          <path d="M4.500 13h19.500v10.500H4.500z" fill="#6c8ca0" stroke="#d6e2ea" />
          <path d="M10 13v-1.500h8V13M7 14.500l2 1.500h11l2-1.500M8 15v3M20 15v3" stroke="#d6e2ea" fill="none" />
        </svg>
        <div className="absolute bottom-0 left-[5px] h-[2px] w-[40px] bg-[#76b9ed]" />
      </div>
      <div className={slot}>
        <svg className="h-[20px] w-[20px]" viewBox="0 0 20 20" fill="none" stroke="#fff">
          <circle cx="10" cy="10" r="5.500" strokeWidth="2.600" />
          <circle cx="10" cy="10" r="7.900" strokeWidth="2.800" strokeDasharray="3.100 3.104" strokeDashoffset="1.550" />
        </svg>
        <div className="absolute bottom-0 left-[5px] h-[2px] w-[40px] bg-[#76b9ed]" />
      </div>
      <div className="relative ml-px flex h-[40px] w-[48px] items-center border-b-2 border-[#76b9ed] bg-[#35363a] pl-[13px]">
        <svg className="h-[15px] w-[21px]" viewBox="0 0 21 15">
          <path d="M0 0h21v15H0z" fill="#4ab5f1" />
          <path d="M1 1h19v13H1z" fill="#68c8fa" />
          <circle cx="7" cy="6" r="3.500" fill="#1173bd" />
          <path d="M7 6V2.500A3.500 3.500 0 0 1 10.500 6z" fill="#fff" />
          <path d="M12 7h2V5M15 3h4M15 5.500h4M15 8h4M3 12h8" stroke="#fff" fill="none" />
          <path d="M12 12h4" stroke="#f2a93b" strokeWidth="1.500" />
        </svg>
        <div className="absolute right-0 top-0 h-[38px] w-[4px] border-l border-[#1a1a1c] bg-[#2c2d30]" />
      </div>
      <div className="ml-auto flex items-center">
        <svg className="h-[7px] w-[12px]" viewBox="0 0 12 7" fill="none" stroke="#fff" strokeWidth="1.300"><path d="M.5 6.500L6 1l5.500 5.500" /></svg>
        <svg className="ml-[10px] mt-[2px] h-[16px] w-[17px]" viewBox="0 0 17 16" fill="none">
          <path d="M.6 5h2.600L7 1.500v12L3.200 10H.6z" stroke="#fff" strokeWidth="1.200" />
          <circle cx="11.500" cy="10.500" r="4.600" fill="#d9202c" />
          <path d="M9.700 8.700l3.600 3.600M13.300 8.700l-3.600 3.600" stroke="#fff" strokeWidth="1.400" />
        </svg>
        <div className="ml-[9px] flex w-[52px] flex-col items-center leading-[18px]">
          <T w={42}>1:57 PM</T>
          <T w={52}>8/14/2025</T>
        </div>
        <svg className="ml-[18px] mr-[20px] h-[17px] w-[16px]" viewBox="0 0 16 17" fill="none" stroke="#fff" strokeWidth="1.200">
          <path d="M.6 1.600h14.800v12H10.500L8 16l-2.500-2.400H.6z" />
        </svg>
        <div className="mr-[4px] h-[40px] w-px bg-[#6d7074]" />
      </div>
    </div>
  );
}

export default function App() {
  return (
    <div className="relative h-[801px] w-[1290px] overflow-hidden bg-[#001532] font-['Noto_Sans','Open_Sans',sans-serif]">
      <Wallpaper />
      <DesktopIcons />
      <div className="absolute right-[5px] top-[710px] flex flex-col items-end text-[12px] leading-[16.500px] text-white">
        <T w={219}>Windows Server 2019 Standard Evaluation</T>
        <T w={185}>Windows License valid for 138 days</T>
        <T w={187}>Build 17763.rs5_release.180914-1434</T>
      </div>
      <SettingsWindow />
      <NetworkWindow />
      <StatusDialog />
      <PropertiesDialog />
      <Ipv4Dialog />
      <Annotations />
      <Taskbar />
      <div className="absolute left-0 top-0 h-[801px] w-[10px] bg-[#2b2b2b]" />
      <div className="absolute bottom-0 left-0 h-[2px] w-[1290px] bg-[#2a2728]" />
    </div>
  );
}
